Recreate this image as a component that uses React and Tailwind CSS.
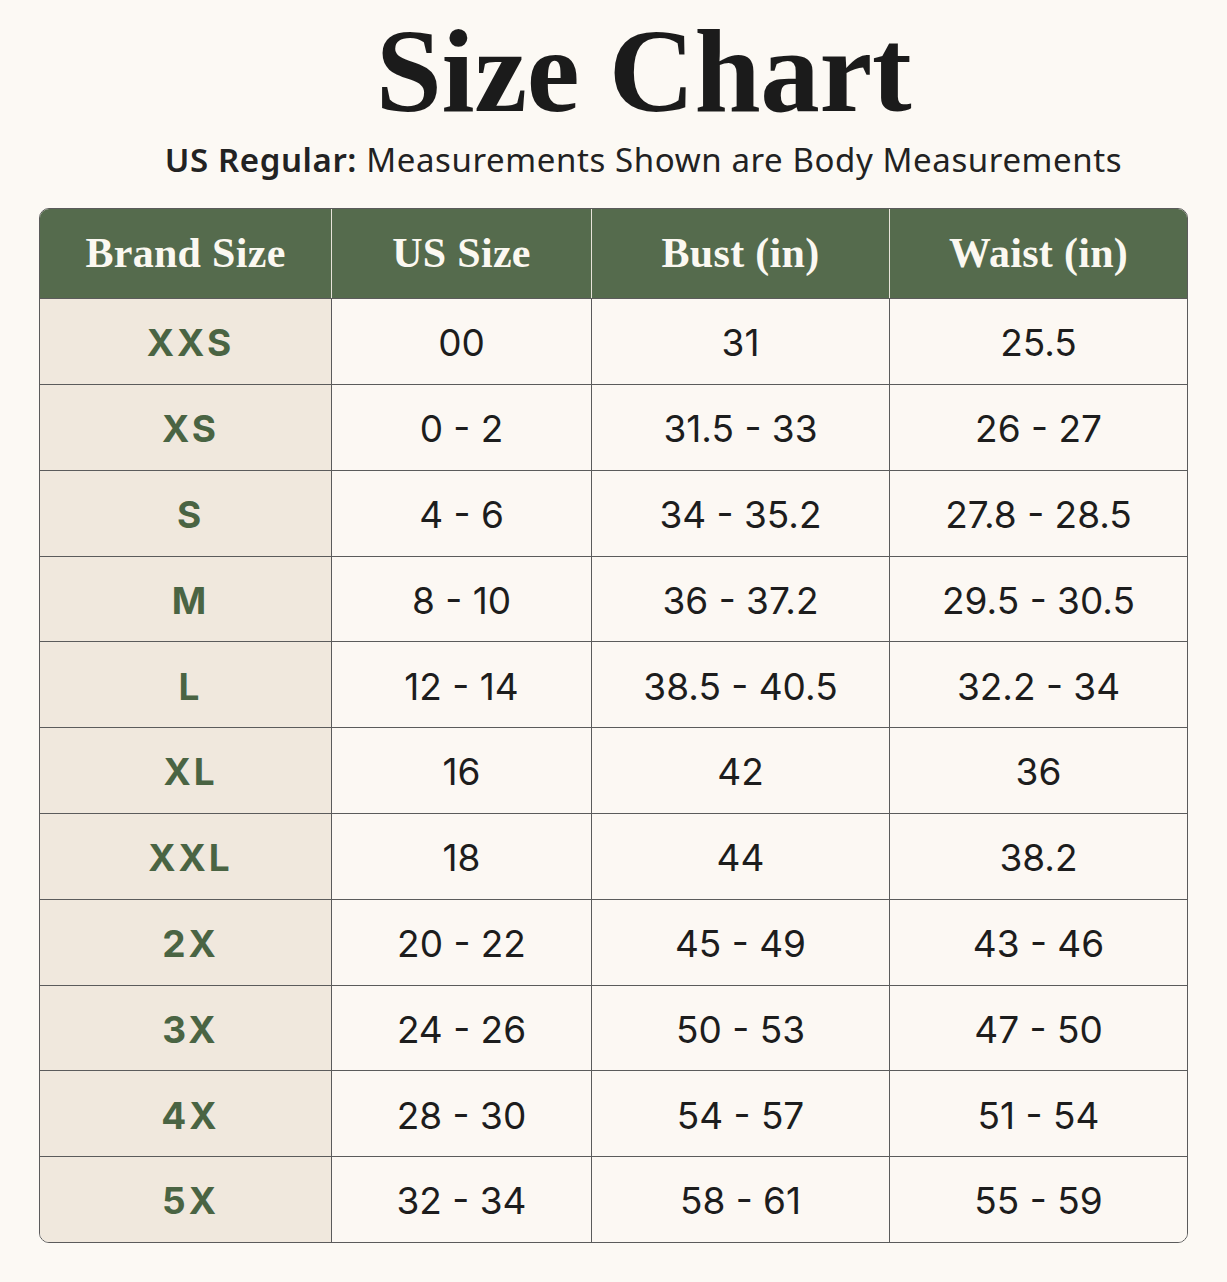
import React from "react";

const rows = [
	["XXS", "00", "31", "25.5"],
	["XS", "0 - 2", "31.5 - 33", "26 - 27"],
	["S", "4 - 6", "34 - 35.2", "27.8 - 28.5"],
	["M", "8 - 10", "36 - 37.2", "29.5 - 30.5"],
	["L", "12 - 14", "38.5 - 40.5", "32.2 - 34"],
	["XL", "16", "42", "36"],
	["XXL", "18", "44", "38.2"],
	["2X", "20 - 22", "45 - 49", "43 - 46"],
	["3X", "24 - 26", "50 - 53", "47 - 50"],
	["4X", "28 - 30", "54 - 57", "51 - 54"],
	["5X", "32 - 34", "58 - 61", "55 - 59"],
];

const headers = ["Brand Size", "US Size", "Bust (in)", "Waist (in)"];

function App() {
	return (
		<div className="min-h-[1282px] w-full bg-[#fcf9f4] pt-[12px] font-['Noto_Sans',sans-serif] text-[#1c1c1c]">
			<div className="pl-[60px] text-center">
				<h1 className="font-['Liberation_Serif',serif] text-[119px] font-bold leading-none tracking-[-0.3px] text-[#1b1b1b]">
					Size Chart
				</h1>
				<p className="mt-[8px] text-[33px] leading-tight tracking-[0.6px] text-[#222]">
					<span className="font-semibold">US Regular:</span> Measurements Shown are Body
					Measurements
				</p>
			</div>

			<div className="mx-[39px] mt-[28px] overflow-hidden rounded-[10px] border-[1.5px] border-[#5b5b5b]">
				<div className="grid grid-cols-[291px_260px_298px_1fr]">
					{headers.map((h, i) => (
						<div
							key={h}
							className={`flex h-[89px] items-center justify-center bg-[#556b4d] font-['Liberation_Serif',serif] text-[42px] font-bold tracking-[0.3px] text-[#fbf8f1] ${
								i > 0 ? "border-l-[1.5px] border-[#e8e4da]" : ""
							}`}
						>
							{h}
						</div>
					))}
					{rows.map((r, ri) =>
						r.map((c, ci) => (
							<div
								key={ri + "-" + ci}
								className={`flex h-[85.8px] items-center justify-center border-t-[1.5px] border-[#5b5b5b] font-['Inter',sans-serif] whitespace-pre ${
									ci > 0
										? "border-l-[1.5px] bg-[#fcf8f3] pt-[3px] text-[37px] text-[#1d1d1d]"
										: "bg-[#f0e8dd] pl-[10px] pt-[3px] text-[37px] font-bold tracking-[3px] text-[#4a6443]"
								}`}
							>
								{c}
							</div>
						))
					)}
				</div>
			</div>
		</div>
	);
}

export default App;
